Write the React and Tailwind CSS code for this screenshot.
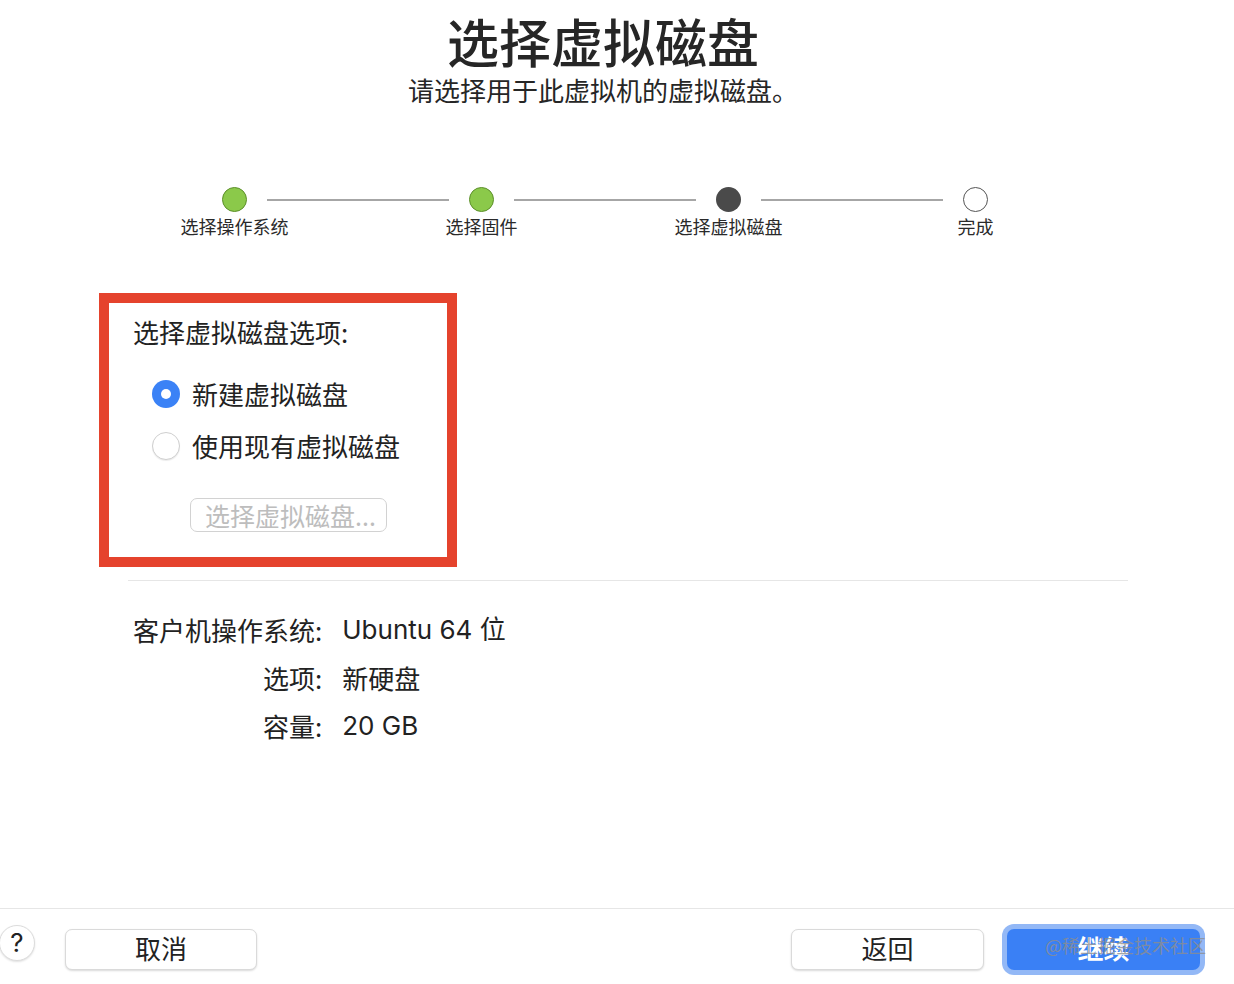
const cjk = { fontFamily: '"Noto Sans CJK SC", "Liberation Sans", sans-serif' };
const latin = { fontFamily: 'Inter, "Noto Sans CJK SC", sans-serif' };

const steps = [
  { label: "选择操作系统", state: "done" },
  { label: "选择固件", state: "done" },
  { label: "选择虚拟磁盘", state: "current" },
  { label: "完成", state: "todo" },
];

function StepDot({ state }) {
  if (state === "done") {
    return <div className="h-[25px] w-[25px] shrink-0 rounded-full border border-[#5c8f2a] bg-[#8bc94a]" />;
  }
  if (state === "current") {
    return <div className="h-[25px] w-[25px] shrink-0 rounded-full bg-[#4a4a4a]" />;
  }
  return <div className="h-[25px] w-[25px] shrink-0 rounded-full border border-[#555] bg-white" />;
}

function Radio({ checked, label }) {
  return (
    <div className="flex h-[28px] items-center">
      {checked ? (
        <div className="flex h-[28px] w-[28px] items-center justify-center rounded-full bg-[#3b82f6]">
          <div className="h-[10px] w-[10px] rounded-full bg-white" />
        </div>
      ) : (
        <div className="h-[28px] w-[28px] rounded-full border border-[#cfcfcf] bg-white shadow-[0_1px_1px_rgba(0,0,0,0.08)]" />
      )}
      <span className="ml-[12px] text-[26px] leading-none text-[#222]">{label}</span>
    </div>
  );
}

export default function App() {
  return (
    <div className="flex h-[984px] w-[1234px] flex-col bg-white text-[#222]" style={cjk}>
      <div className="pr-[28px]">
        <h1 className="pt-[15px] text-center text-[52px] leading-none font-medium text-[#262626]">选择虚拟磁盘</h1>
        <p className="mt-[10px] text-center text-[26px] leading-none text-[#262626]">请选择用于此虚拟机的虚拟磁盘。</p>
      </div>

      {/* stepper */}
      <div className="mt-[84px] ml-[222px] flex items-center">
        {steps.map((s, i) => (
          <div key={s.label} className="flex items-center">
            <StepDot state={s.state} />
            {i < steps.length - 1 && <div className="mx-[20px] h-[2px] w-[182px] bg-[#a6a6a6]" />}
          </div>
        ))}
      </div>
      <div className="mt-[5px] ml-[111px] grid w-[988px] grid-cols-4">
        {steps.map((s) => (
          <div key={s.label} className="text-center text-[18px] leading-none text-[#2a2a2a]">
            {s.label}
          </div>
        ))}
      </div>

      {/* options box */}
      <div className="mt-[58px] ml-[99px] w-[358px] border-[10px] border-[#e5432d] bg-white pt-[16px] pb-[25px] pl-[24px]">
        <div className="text-[26px] leading-none text-[#222]">选择虚拟磁盘选项:</div>
        <div className="mt-[35px] ml-[19px] flex flex-col gap-[24px]">
          <Radio checked label="新建虚拟磁盘" />
          <Radio label="使用现有虚拟磁盘" />
        </div>
        <button className="mt-[38px] ml-[57px] flex h-[34px] w-[197px] items-center rounded-[7px] border border-[#d2d2d2] bg-white pl-[14px] text-[25px] leading-none text-[#bdbdbd]">
          选择虚拟磁盘...
        </button>
      </div>

      <div className="mt-[13px] ml-[128px] h-px w-[1000px] bg-[#e6e6e6]" />

      {/* summary */}
      <div className="mt-[25px] ml-[133px] grid grid-cols-[auto_1fr] gap-x-[20px] text-[26px] leading-[48px] text-[#222]">
        <div className="text-right">客户机操作系统:</div>
        <div style={latin}>Ubuntu 64 位</div>
        <div className="text-right">选项:</div>
        <div>新硬盘</div>
        <div className="text-right">容量:</div>
        <div style={latin}>20 GB</div>
      </div>

      <div className="flex-1" />

      {/* footer */}
      <div className="flex h-[76px] items-start border-t border-[#e6e6e6] pt-[20px]">
        <div className="-ml-px mt-[-4px] flex h-[36px] w-[36px] items-center justify-center rounded-full border border-[#dcdcdc] bg-white text-[26px] leading-none text-[#222] shadow-[0_1px_2px_rgba(0,0,0,0.12)]" style={latin}>
          ?
        </div>
        <button className="ml-[30px] flex h-[41px] w-[192px] items-center justify-center rounded-[7px] border border-[#dadada] bg-white pb-[3px] text-[26px] leading-none text-[#222] shadow-[0_1px_2px_rgba(0,0,0,0.15)]">
          取消
        </button>
        <div className="flex-1" />
        <button className="flex h-[41px] w-[193px] items-center justify-center rounded-[7px] border border-[#dadada] bg-white pb-[3px] text-[26px] leading-none text-[#222] shadow-[0_1px_2px_rgba(0,0,0,0.15)]">
          返回
        </button>
        <div className="relative mr-[34px] ml-[23px] h-[41px] w-[193px]">
          <button className="flex h-[41px] w-[193px] items-center justify-center rounded-[7px] bg-[#3a80f5] pb-[3px] text-[26px] leading-none font-bold text-white ring-[5px] ring-[#93b8f6]">
            继续
          </button>
          <span className="pointer-events-none absolute top-[7px] left-[38px] text-[18px] leading-none whitespace-nowrap text-[#8e8e8e]/80">
            @稀土掘金技术社区
          </span>
        </div>
      </div>
    </div>
  );
}
